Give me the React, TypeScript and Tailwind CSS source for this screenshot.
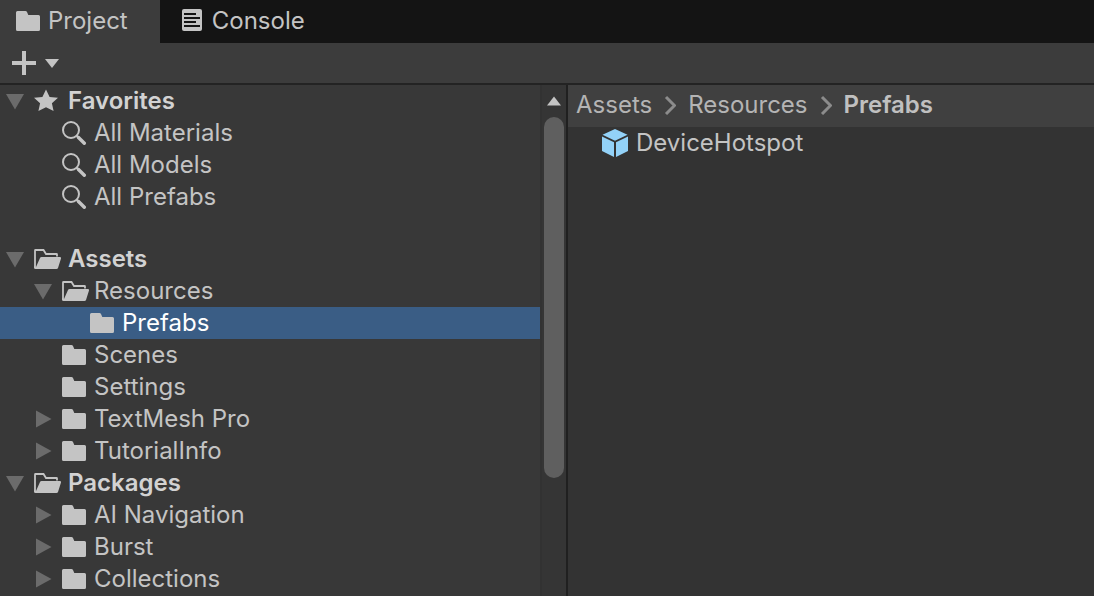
import React, { useState } from "react";

type IconName = "folder" | "open" | "search" | "star";
type Item = {
  label: string;
  icon: IconName;
  depth: 0 | 1 | 2;
  arrow?: "down" | "right";
};

const favorites: Item[] = [
  { label: "Favorites", icon: "star", depth: 0, arrow: "down" },
  { label: "All Materials", icon: "search", depth: 1 },
  { label: "All Models", icon: "search", depth: 1 },
  { label: "All Prefabs", icon: "search", depth: 1 },
];

const assets: Item[] = [
  { label: "Assets", icon: "open", depth: 0, arrow: "down" },
  { label: "Resources", icon: "open", depth: 1, arrow: "down" },
  { label: "Prefabs", icon: "folder", depth: 2 },
  { label: "Scenes", icon: "folder", depth: 1 },
  { label: "Settings", icon: "folder", depth: 1 },
  { label: "TextMesh Pro", icon: "folder", depth: 1, arrow: "right" },
  { label: "TutorialInfo", icon: "folder", depth: 1, arrow: "right" },
  { label: "Packages", icon: "open", depth: 0, arrow: "down" },
  { label: "AI Navigation", icon: "folder", depth: 1, arrow: "right" },
  { label: "Burst", icon: "folder", depth: 1, arrow: "right" },
  { label: "Collections", icon: "folder", depth: 1, arrow: "right" },
];

const indent = ["pl-1.5", "pl-[34px]", "pl-[62px]"];

function FolderIcon() {
  return (
    <svg viewBox="0 0 28 24" className="h-6 w-7 shrink-0" fill="#c4c4c4" aria-hidden="true">
      <path d="M1.5 2H9.5Q10.500 2 11 3L12.300 6H22.500Q24 6 24 7.500V20.500Q24 22 22.500 22H1.500Q0 22 0 20.500V3.500Q0 2 1.500 2Z" />
    </svg>
  );
}

function OpenFolderIcon() {
  return (
    <svg viewBox="0 0 28 24" className="h-6 w-7 shrink-0" aria-hidden="true">
      <path
        d="M1 20.500V3.500Q1 3 1.500 3H9.500L12 7H22.500Q23 7 23 7.500V9.500"
        fill="none"
        stroke="#c4c4c4"
        strokeWidth="1.800"
      />
      <path d="M0 19L2 20L6 11Q6.500 10 7.500 10H26Q27.500 10 27 11.500L24 21Q23.600 22 22.500 22H1.500Q0 22 0 20.500Z" fill="#c4c4c4" />
    </svg>
  );
}

function SearchIcon() {
  return (
    <svg viewBox="0 0 28 24" className="h-6 w-7 shrink-0" fill="none" stroke="#c4c4c4" aria-hidden="true">
      <circle cx="9" cy="9" r="8" strokeWidth="2" />
      <path d="M14.500 14.500L17 17" strokeWidth="2.400" />
      <path d="M16.500 16.500L22.300 22.300" strokeWidth="3.400" strokeLinecap="round" />
    </svg>
  );
}

function StarIcon() {
  return (
    <svg viewBox="0 0 28 24" className="h-6 w-7 shrink-0" fill="#c4c4c4" aria-hidden="true">
      <path d="M12 0.500L15.600 7.900L24 8.800L17.900 14.200L19.600 22L12 18.200L4.400 22L6.100 14.200L0 8.800L8.400 7.900Z" />
    </svg>
  );
}

function ItemIcon({ name }: { name: IconName }) {
  if (name === "folder") return <FolderIcon />;
  if (name === "open") return <OpenFolderIcon />;
  if (name === "search") return <SearchIcon />;
  return <StarIcon />;
}

function Arrow({ dir }: { dir?: "down" | "right" }) {
  return (
    <svg viewBox="0 0 18 18" className="mr-2.5 size-[18px] shrink-0" fill="#6b6b6b" aria-hidden="true">
      {dir === "down" && <path d="M0 2H18L9 17.500Z" />}
      {dir === "right" && <path d="M2 0.500L17.500 9L2 17.500Z" />}
    </svg>
  );
}

function TreeRow({ item, selected, onSelect }: { item: Item; selected: boolean; onSelect: () => void }) {
  return (
    <li>
      <button
        type="button"
        onClick={onSelect}
        className={`flex h-8 w-full items-center whitespace-nowrap text-left ${indent[item.depth]} ${
          selected ? "bg-[#3a5d85] text-white" : ""
        } ${item.depth === 0 ? "font-semibold text-[#d2d2d2]" : ""}`}
      >
        <Arrow dir={item.arrow} />
        <ItemIcon name={item.icon} />
        <span className={item.depth === 0 ? "ml-1.5" : "ml-1"}>{item.label}</span>
      </button>
    </li>
  );
}

function Chevron() {
  return (
    <svg viewBox="0 0 12 20" className="mx-3 h-5 w-3 shrink-0" fill="none" stroke="#8c8c8c" strokeWidth="3" aria-hidden="true">
      <path d="M2 2L10.500 10.500L2 19" />
    </svg>
  );
}

export default function App() {
  const [selected, setSelected] = useState("Prefabs");
  const rows = (items: Item[]) =>
    items.map((item) => (
      <TreeRow
        key={item.label}
        item={item}
        selected={selected === item.label}
        onSelect={() => setSelected(item.label)}
      />
    ));

  return (
    <div className="flex h-screen flex-col overflow-hidden bg-[#383838] font-['Inter',sans-serif] text-2xl leading-8 text-[#c4c4c4]">
      <div role="tablist" className="flex h-[43px] shrink-0 bg-[#141414]">
        <button type="button" role="tab" aria-selected="true" className="flex items-center bg-[#3c3c3c] pr-8 pl-4 pb-0.5">
          <FolderIcon />
          <span className="ml-1">Project</span>
        </button>
        <button type="button" role="tab" aria-selected="false" className="flex items-center px-5 pb-0.5">
          <svg viewBox="0 0 24 24" className="size-6" aria-hidden="true">
            <rect x="2" y="0" width="20" height="22" rx="2" fill="#c4c4c4" />
            <path d="M4 5H16M4 9H20M4 13H16M4 17H20" stroke="#141414" strokeWidth="2" />
          </svg>
          <span className="ml-2">Console</span>
        </button>
      </div>

      <div className="flex h-[42px] shrink-0 items-center border-b-2 border-[#232323] bg-[#3c3c3c] pl-3">
        <button type="button" aria-label="Create" className="flex items-center">
          <svg viewBox="0 0 24 24" className="size-6" stroke="#c4c4c4" strokeWidth="4" aria-hidden="true">
            <path d="M12 0V24M0 12H24" />
          </svg>
          <svg viewBox="0 0 16 10" className="ml-2 h-2.5 w-4" fill="#c4c4c4" aria-hidden="true">
            <path d="M1 1H15L8 10Z" />
          </svg>
        </button>
      </div>

      <div className="flex min-h-0 flex-1">
        <nav aria-label="Folders" className="w-[540px] shrink-0 overflow-hidden">
          <ul>{rows(favorites)}</ul>
          <ul className="mt-[30px]">{rows(assets)}</ul>
        </nav>

        <div className="flex w-7 shrink-0 flex-col items-center border-r-2 border-l-2 border-l-[#323232] border-r-[#202020] bg-[#353535]">
          <button type="button" aria-label="Scroll up" className="flex h-8 w-full shrink-0 items-center justify-center">
            <svg viewBox="0 0 14 10" className="h-2.5 w-3.5" fill="#c4c4c4" aria-hidden="true">
              <path d="M0 9.500H14L7 0.500Z" />
            </svg>
          </button>
          <div className="h-[70.6%] w-5 rounded-full bg-[#5f5f5f]" />
        </div>

        <main className="flex min-w-0 flex-1 flex-col bg-[#333333]">
          <nav aria-label="Breadcrumb" className="flex h-[42px] shrink-0 items-center bg-[#404040] pl-2 pb-0.5 text-[#b4b4b4]">
            <a href="#assets">Assets</a>
            <Chevron />
            <a href="#resources">Resources</a>
            <Chevron />
            <a href="#prefabs" className="font-semibold text-[#c0c0c0]">Prefabs</a>
          </nav>
          <button type="button" className="flex h-8 w-full items-center pl-8 text-left">
            <svg viewBox="0 0 28 28" className="size-7 shrink-0" fill="#93d2f8" aria-hidden="true">
              <path d="M15 0L27.500 5.800L15 11.800L2.500 5.800Z" />
              <path d="M2 7.500L14 13.300V28L2 22Z" />
              <path d="M28 7.500L16 13.300V28L28 22Z" />
            </svg>
            <span className="ml-2">DeviceHotspot</span>
          </button>
        </main>
      </div>
    </div>
  );
}
